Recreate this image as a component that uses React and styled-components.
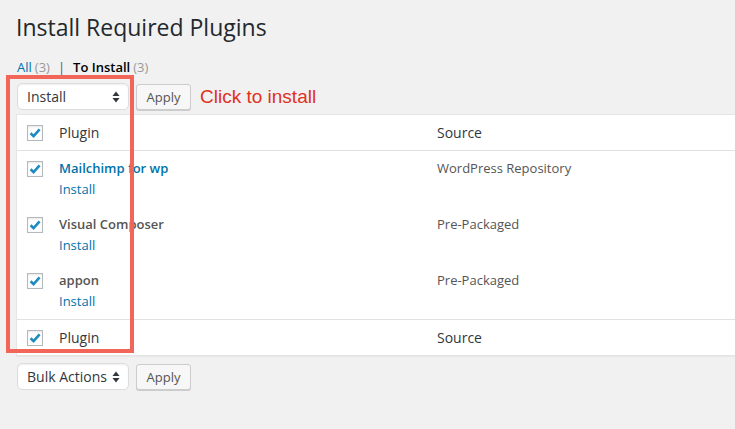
import React from 'react';
import styled, { createGlobalStyle } from 'styled-components';

const plugins = [
  { name: 'Mailchimp for wp', source: 'WordPress Repository', link: true },
  { name: 'Visual Composer', source: 'Pre-Packaged', link: false },
  { name: 'appon', source: 'Pre-Packaged', link: false },
];

const GlobalStyle = createGlobalStyle`
  html, body {
    margin: 0;
    padding: 0;
    background: #f1f1f1;
    overflow: hidden;
  }
  body {
    font-family: "Open Sans", "Noto Sans", sans-serif;
    color: #444;
    font-size: 13px;
  }
`;

const Check = () => (
  <CheckBox>
    <svg width="14" height="14" viewBox="0 0 14 14">
      <path d="M2.6 7.2 L5.6 10.1 L11.6 3.4" fill="none" stroke="#1e8cbe" strokeWidth="2.6" strokeLinecap="butt" strokeLinejoin="miter" />
    </svg>
  </CheckBox>
);

const Arrows = () => (
  <svg width="8" height="12" viewBox="0 0 8 12">
    <path d="M4 0.5 L7.5 5 L0.5 5 Z" fill="#32373c" />
    <path d="M4 11.5 L7.5 7 L0.5 7 Z" fill="#32373c" />
  </svg>
);

const Nav = ({ value, note }) => (
  <TableNav>
    <Select>
      <span>{value}</span>
      <Arrows />
    </Select>
    <Button>Apply</Button>
    {note && <Note>{note}</Note>}
  </TableNav>
);

const HeadRow = ({ foot }) => (
  <Row head foot={foot}>
    <CheckCell head><Check /></CheckCell>
    <HeadCell>Plugin</HeadCell>
    <HeadCell>Source</HeadCell>
  </Row>
);

const App = () => {
  return (
    <Wrap>
      <GlobalStyle />
      <Title>Install Required Plugins</Title>
      <Filters>
        <a>All</a><Count>(3)</Count>
        <Sep>|</Sep>
        <Current>To Install</Current><Count>(3)</Count>
      </Filters>
      <Nav value="Install" note="Click to install" />
      <Table>
        <HeadRow />
        {plugins.map((p) => (
          <Row key={p.name}>
            <CheckCell><Check /></CheckCell>
            <Cell>
              <Name link={p.link}>{p.name}</Name>
              <Action>Install</Action>
            </Cell>
            <Cell>{p.source}</Cell>
          </Row>
        ))}
        <HeadRow foot />
      </Table>
      <BottomNav>
        <Nav value="Bulk Actions" />
      </BottomNav>
      <Highlight />
    </Wrap>
  );
};

export default App;

const Wrap = styled.div`
  position: relative;
  padding-left: 16px;
  height: 429px;
`;

const Title = styled.h1`
  margin: 0;
  padding-top: 13px;
  font-size: 23px;
  line-height: 29px;
  font-weight: 400;
  color: #23282d;
`;

const Filters = styled.div`
  margin-top: 16px;
  height: 18px;
  line-height: 18px;
  font-size: 13px;
  color: #666;
  a {
    color: #0073aa;
    padding-left: 1px;
    margin-right: 3px;
  }
`;

const Count = styled.span`
  color: #999;
`;

const Sep = styled.span`
  color: #555;
  margin: 0 8px 0 8px;
`;

const Current = styled.span`
  color: #000;
  font-weight: 600;
  margin-right: 3px;
`;

const TableNav = styled.div`
  display: flex;
  align-items: flex-start;
  height: 27px;
  margin-top: 7px;
`;

const BottomNav = styled.div`
  margin-top: 4px;
`;

const Select = styled.div`
  box-sizing: border-box;
  width: 112px;
  height: 27px;
  margin-left: 1px;
  padding: 0 8px 0 9px;
  display: flex;
  align-items: center;
  justify-content: space-between;
  background: #fff;
  border: 1px solid #ddd;
  border-radius: 5px;
  box-shadow: inset 0 1px 2px rgba(0, 0, 0, 0.07);
  font-size: 14px;
  color: #32373c;
`;

const Button = styled.div`
  box-sizing: border-box;
  width: 55px;
  height: 26px;
  margin: 1px 0 0 7px;
  display: flex;
  align-items: center;
  justify-content: center;
  background: #f7f7f7;
  border: 1px solid #ccc;
  border-radius: 3px;
  box-shadow: 0 1px 0 #ccc;
  font-size: 13px;
  color: #555;
`;

const Note = styled.div`
  margin: 1px 0 0 9px;
  font-family: "Liberation Sans", Arial, sans-serif;
  font-size: 19px;
  line-height: 26px;
  color: #e0311f;
`;

const Table = styled.div`
  margin-top: 4px;
  width: 740px;
  background: #fff;
  border: 1px solid #e5e5e5;
  box-shadow: 0 1px 1px rgba(0, 0, 0, 0.04);
`;

const Row = styled.div`
  display: grid;
  grid-template-columns: 32px 378px 1fr;
  height: ${(p) => (p.head ? '35px' : '56px')};
  border-bottom: ${(p) => (p.head && !p.foot ? '1px solid #e1e1e1' : 'none')};
  border-top: ${(p) => (p.foot ? '1px solid #e1e1e1' : 'none')};
`;

const CheckCell = styled.div`
  display: flex;
  align-items: ${(p) => (p.head ? 'center' : 'flex-start')};
  padding: ${(p) => (p.head ? '0 0 0 10px' : '10px 0 0 10px')};
`;

const CheckBox = styled.div`
  box-sizing: border-box;
  width: 16px;
  height: 16px;
  border: 1px solid #b4b9be;
  background: #fff;
  box-shadow: inset 0 1px 2px rgba(0, 0, 0, 0.1);
  display: flex;
  align-items: center;
  justify-content: center;
`;

const HeadCell = styled.div`
  display: flex;
  align-items: center;
  padding-left: 10px;
  font-size: 14px;
  color: #32373c;
`;

const Cell = styled.div`
  padding: 8px 10px;
  font-size: 13px;
  line-height: 19px;
  color: #555;
`;

const Name = styled.div`
  font-weight: 600;
  color: ${(p) => (p.link ? '#0073aa' : '#555')};
`;

const Action = styled.div`
  margin-top: 2px;
  color: #0073aa;
`;

const Highlight = styled.div`
  position: absolute;
  left: 6px;
  top: 75px;
  width: 128px;
  height: 278px;
  box-sizing: border-box;
  border: 4px solid #f2665a;
  pointer-events: none;
`;
